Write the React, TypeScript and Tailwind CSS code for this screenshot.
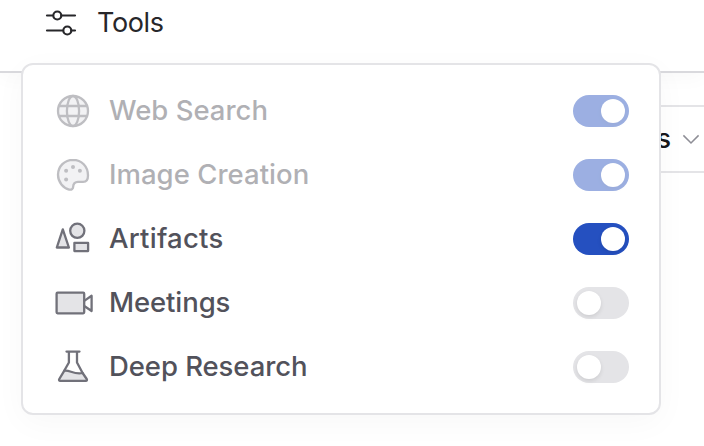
import type { ReactNode } from "react";
import clsx from "clsx";

const SlidersIcon = () => (
  <svg width="32" height="32" viewBox="0 0 32 32" fill="none" stroke="#27272a" strokeWidth="2.2" strokeLinecap="round">
    <path d="M2 8.5h5.2M16.4 8.5H30M2 23.5h15.2M26.4 23.5H30" />
    <circle cx="12.3" cy="8.5" r="4" />
    <circle cx="22.3" cy="23.5" r="4" />
  </svg>
);

const GlobeIcon = () => (
  <>
    <circle cx="20" cy="20" r="15" fill="#e4e4e7" />
    <ellipse cx="20" cy="20" rx="6.1" ry="15" />
    <path d="M6 15h28M6 25h28" />
  </>
);

const PaletteIcon = () => (
  <>
    <path
      d="M20 4.8C11.6 4.8 5 11.4 5 19.8C5 27.3 10.4 33.2 16.2 34.6C18.6 35.1 20.2 33.8 20.2 31.6C20.2 28.6 22 26.8 25 26.8H30.2C33.6 26.8 35 24 35 20.4C35 11.4 28.6 4.8 20 4.8Z"
      fill="#e4e4e7"
    />
    <g fill="#71717a" stroke="none">
      <circle cx="20" cy="12" r="2" />
      <circle cx="13.1" cy="15.8" r="2" />
      <circle cx="26.9" cy="15.8" r="2" />
      <circle cx="13.1" cy="24.4" r="2" />
    </g>
  </>
);

const ShapesIcon = () => (
  <>
    <path d="M9.8 10.4L15.9 28.5H3.8Z" fill="#e4e4e7" />
    <circle cx="24.3" cy="11.8" r="7.1" fill="#e4e4e7" />
    <path d="M21.4 23.9H35.1V32.1H21.4Z" fill="#e4e4e7" />
  </>
);

const CameraIcon = () => (
  <>
    <rect x="3.6" y="9.7" width="27.6" height="20.6" rx="1" fill="#e4e4e7" />
    <path d="M31.6 17.6L38.6 12.8V28L31.6 23.2" />
  </>
);

const FlaskIcon = () => (
  <>
    <path d="M11.2 23.8C16 22.3 21 28 29.6 26L33.7 32C34.3 33.2 33.8 33.9 32.8 33.9H7.2C6.1 33.9 5.7 33.1 6.3 32Z" fill="#e4e4e7" />
    <path d="M13.5 4.6H26.5M15.9 4.6V15.5L11.2 23.8M24 4.6V15.5L29.6 26" />
  </>
);

type Tool = {
  label: string;
  icon: ReactNode;
  on: boolean;
  locked?: boolean;
  tracking: string;
};

const tools: Tool[] = [
  { label: "Web Search", icon: <GlobeIcon />, on: true, locked: true, tracking: "tracking-normal" },
  { label: "Image Creation", icon: <PaletteIcon />, on: true, locked: true, tracking: "tracking-[0.03px]" },
  { label: "Artifacts", icon: <ShapesIcon />, on: true, tracking: "tracking-[0.25px]" },
  { label: "Meetings", icon: <CameraIcon />, on: false, tracking: "tracking-[-0.1px]" },
  { label: "Deep Research", icon: <FlaskIcon />, on: false, tracking: "tracking-[-0.07px]" },
];

function Toggle({ on }: { on: boolean }) {
  return (
    <span className={clsx("flex h-8 w-14 rounded-full p-1", on ? "justify-end bg-[#2550c0]" : "bg-[#e4e4e7]")}>
      <span className="size-6 rounded-full bg-white shadow-[0_2px_4px_rgba(0,0,0,0.1)]" />
    </span>
  );
}

function ToolRow({ label, icon, on, locked, tracking }: Tool) {
  return (
    <li className={clsx("flex h-16 items-center", locked && "opacity-45")}>
      <svg
        width="40"
        height="40"
        viewBox="0 0 40 40"
        fill="none"
        stroke="#71717a"
        strokeWidth="2.3"
        strokeLinecap="round"
        strokeLinejoin="round"
        className="shrink-0"
      >
        {icon}
      </svg>
      <span className={clsx("ml-4 flex-1 whitespace-nowrap text-[27.5px] font-medium text-[#52525b]", tracking)}>
        {label}
      </span>
      <Toggle on={on} />
    </li>
  );
}

export default function App() {
  return (
    <div className="relative h-[446px] w-[704px] overflow-hidden bg-white font-['Inter',sans-serif]">
      <header className="flex h-[73px] items-start gap-5 border-b-2 border-[#d9d9dd] pl-[45px] shadow-[0_4px_20px_rgba(0,0,0,0.03)]">
        <div className="mt-[7px]">
          <SlidersIcon />
        </div>
        <span className="mt-[3px] text-[27px] leading-10 tracking-[-0.4px] text-[#27272a]">Tools</span>
      </header>

      <div className="mt-8 flex justify-end">
        <div className="flex h-[68px] w-[104px] items-center justify-end border-y-2 border-[#e4e4e7]">
          <span className="text-[27px] font-medium text-[#18181b]">s</span>
          <svg width="20" height="20" viewBox="0 0 20 20" fill="none" stroke="#8e8e96" strokeWidth="1.5" className="mr-[3px] ml-2.5">
            <path d="M2.4 6.4L10 14L17.6 6.4" />
          </svg>
        </div>
      </div>

      <ul className="absolute top-[63px] left-[21px] w-[640px] rounded-xl border-2 border-[#e4e4e7] bg-white px-[30px] py-3.5 shadow-[0_8px_32px_rgba(0,0,0,0.03)]">
        {tools.map((tool) => (
          <ToolRow key={tool.label} {...tool} />
        ))}
      </ul>
    </div>
  );
}
